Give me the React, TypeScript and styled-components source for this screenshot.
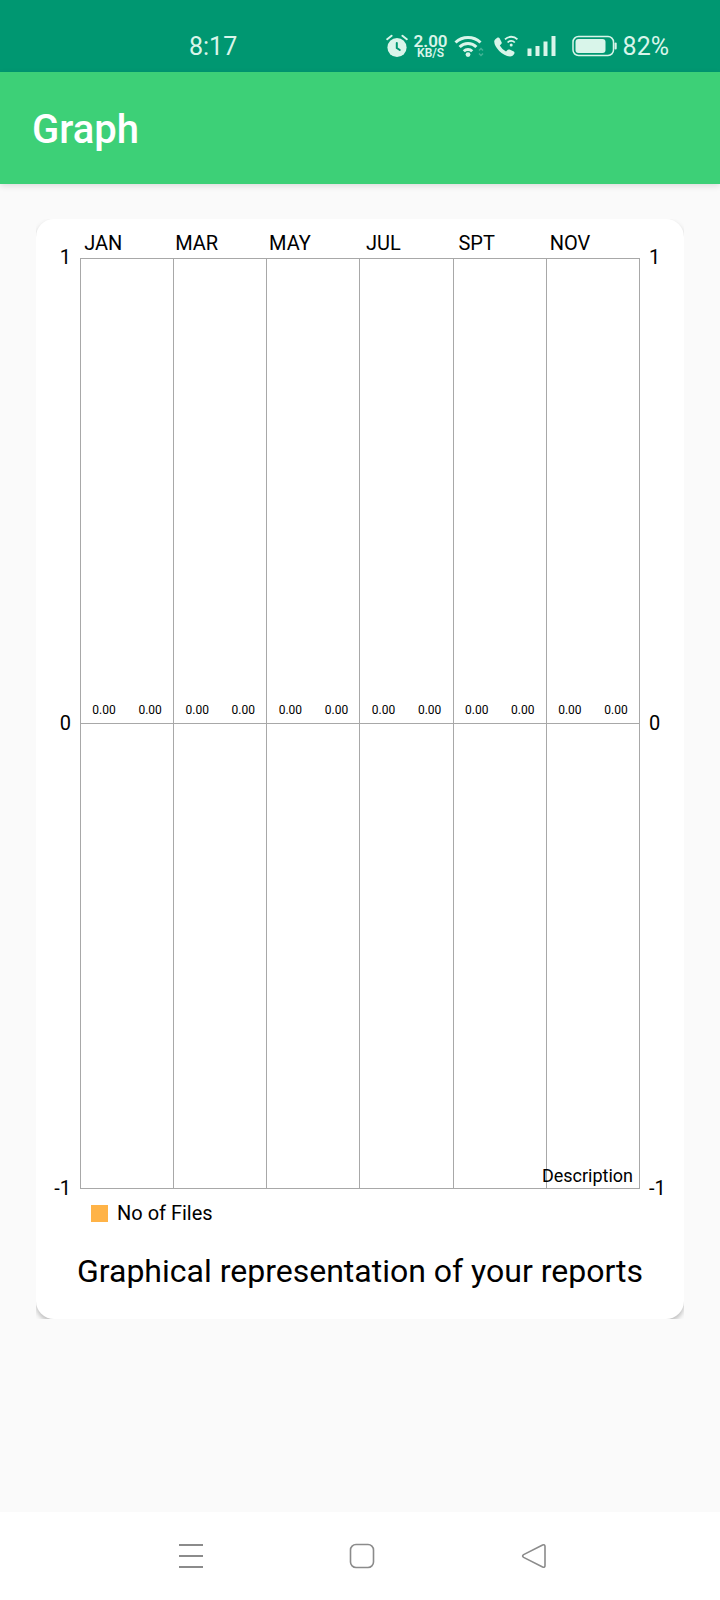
import React from "react";
import styled, { createGlobalStyle } from "styled-components";

const GlobalStyle = createGlobalStyle`
  * { box-sizing: border-box; }
  body {
    margin: 0;
    background: #fafafa;
    color: #000;
    font-family: Roboto, "Liberation Sans", sans-serif;
  }
`;

const Screen = styled.div`
  display: flex;
  flex-direction: column;
  min-height: 100vh;
`;

const StatusBar = styled.div`
  display: flex;
  align-items: center;
  justify-content: space-between;
  height: 72px;
  padding: 20px 51px 0 189px;
  background: #009771;
  color: #d9f5ea;
  font-size: 25px;
  line-height: 28px;
`;

const StatusText = styled.span`
  padding-top: 2px;
`;

const StatusIcons = styled.div`
  display: flex;
  align-items: center;
  gap: 6px;
`;

const NetSpeed = styled.div`
  display: flex;
  flex-direction: column;
  align-items: center;
  font-weight: 600;
  font-size: 12px;
  line-height: 11px;
`;

const SpeedValue = styled.span`
  font-size: 17px;
  line-height: 14px;
`;

const AppBar = styled.header`
  display: flex;
  align-items: center;
  height: 112px;
  padding: 4px 32px 0;
  background: #3dd077;
  color: #fff;
  box-shadow: 0 2px 6px rgba(0, 0, 0, 0.12);
`;

const Title = styled.h1`
  margin: 0;
  font-size: 40px;
  line-height: 48px;
  font-weight: 500;
`;

const Content = styled.main`
  flex: 1;
  padding: 35px 36px;
`;

const CardClip = styled.div`
  overflow: hidden;
`;

const Card = styled.section`
  padding: 12px 0 28px;
  border-radius: 18px;
  background: #fff;
  box-shadow: 0 3px 5px rgba(0, 0, 0, 0.25);
`;

const Chart = styled.div`
  display: grid;
  grid-template-columns: 44px 1fr 44px;
  font-size: 20px;
  line-height: 24px;
`;

const Months = styled.div`
  grid-column: 2;
  display: grid;
  grid-template-columns: repeat(12, 1fr);
  padding-bottom: 3px;
`;

const Month = styled.span<{ $slot: number }>`
  grid-column: ${(p) => p.$slot};
  display: flex;
  justify-content: center;
  white-space: nowrap;
`;

const Axis = styled.div<{ $side: "left" | "right" }>`
  grid-row: 2;
  grid-column: ${(p) => (p.$side === "left" ? 1 : 3)};
  display: flex;
  flex-direction: column;
  justify-content: space-between;
  align-items: ${(p) => (p.$side === "left" ? "flex-end" : "flex-start")};
  margin: -13px 0 -11px;
  padding: 0 9px;
`;

const Plot = styled.div`
  position: relative;
  grid-row: 2;
  grid-column: 2;
  display: grid;
  grid-template-columns: repeat(6, 1fr);
  grid-template-rows: 1fr 1fr;
  aspect-ratio: 560 / 931;
  border: solid #a8a8a8;
  border-width: 0 1px 1px 0;
`;

const Cell = styled.div`
  display: flex;
  align-items: flex-end;
  padding-bottom: 6px;
  border: solid #a8a8a8;
  border-width: 1px 0 0 1px;
`;

const BarValue = styled.span`
  flex: 1;
  font-size: 12px;
  line-height: 14px;
  text-align: center;
`;

const Description = styled.span`
  position: absolute;
  right: 6px;
  bottom: 0;
  font-size: 18px;
`;

const Legend = styled.div`
  display: flex;
  align-items: center;
  gap: 9px;
  padding: 11px 55px 0;
  font-size: 20px;
  line-height: 26px;
`;

const Swatch = styled.span`
  width: 17px;
  height: 17px;
  background: #ffb347;
`;

const Caption = styled.p`
  margin: 0;
  padding-top: 25px;
  font-size: 32px;
  line-height: 40px;
  text-align: center;
`;

const NavBar = styled.nav`
  display: grid;
  grid-template-columns: repeat(3, 1fr);
  justify-items: center;
  align-items: center;
  height: 88px;
  padding: 0 100px 0 105px;
  background: #fff;
`;

const NavButton = styled.button`
  display: flex;
  padding: 10px;
  border: 0;
  background: none;
  color: #8b8b8b;
`;

const Icon = styled.svg`
  display: block;
  flex: none;
  fill: none;
  stroke: currentColor;
`;

const AlarmIcon = () => (
  <Icon width="22" height="24" viewBox="0 0 22 24" strokeWidth="2" strokeLinecap="round">
    <circle cx="11" cy="13.5" r="9.6" fill="currentColor" stroke="none" />
    <path d="M1.2 5.2 5.6 1.8M20.8 5.2 16.4 1.8" />
    <path d="M10.8 9v5l3 2" stroke="#009771" />
  </Icon>
);

const WifiIcon = () => (
  <Icon width="32" height="24" viewBox="0 0 32 24" strokeWidth="3">
    <path d="M1.5 8.5a18 18 0 0 1 25 0M5.6 13a12 12 0 0 1 16.8 0M9.8 17.2a6 6 0 0 1 8.4 0" />
    <circle cx="14" cy="20.6" r="2.4" fill="currentColor" stroke="none" />
    <path d="m25 16.5 2-2 2 2M25 19.5l2 2 2-2" strokeWidth="1.5" opacity="0.3" />
  </Icon>
);

const CallIcon = () => (
  <Icon width="27" height="24" viewBox="-2 0 27 24" strokeWidth="1.8">
    <path
      d="M1.6 5 3.6 3.6q1.2-.6 2 .6l2 4q.5 1-.4 1.8L5.8 11.4q2.4 4.2 6.2 6l1.8-1.6q.8-.6 1.8-.2l4.2 2q1 .6.6 1.8-1.4 3-4.4 3Q10.2 22 5.2 17 .4 12 .2 7.6.2 6 1.6 5Z"
      fill="currentColor"
      stroke="none"
    />
    <path d="M11 5.4a8.6 8.6 0 0 1 12.4 0M13.6 8.5a5 5 0 0 1 7.2 0" />
    <circle cx="17.2" cy="11" r="1.5" fill="currentColor" stroke="none" />
  </Icon>
);

const SignalIcon = () => (
  <Icon width="32" height="22" viewBox="-2 0 32 22" strokeWidth="4">
    <path d="M2.5 13.5V21M10.5 11v10M18.5 6.5V21M26.5 1v20" />
  </Icon>
);

const BatteryIcon = () => (
  <Icon width="54" height="22" viewBox="-9 0 54 22" strokeWidth="1.5">
    <rect x="1" y="1.5" width="40.5" height="19" rx="5.5" />
    <rect x="3.5" y="4" width="30" height="14" rx="3" fill="currentColor" stroke="none" />
    <path d="M43.6 8.5v5" strokeWidth="2.2" strokeLinecap="round" />
  </Icon>
);

const months = ["JAN", "MAR", "MAY", "JUL", "SPT", "NOV"];
const ticks = ["1", "0", "-1"];

const YAxis = ({ side }: { side: "left" | "right" }) => (
  <Axis $side={side}>
    {ticks.map((tick) => (
      <span key={tick}>{tick}</span>
    ))}
  </Axis>
);

export default function App() {
  return (
    <Screen>
      <GlobalStyle />
      <StatusBar>
        <StatusText>8:17</StatusText>
        <StatusIcons>
          <AlarmIcon />
          <NetSpeed>
            <SpeedValue>2.00</SpeedValue>
            <span>KB/S</span>
          </NetSpeed>
          <WifiIcon />
          <CallIcon />
          <SignalIcon />
          <BatteryIcon />
          <StatusText>82%</StatusText>
        </StatusIcons>
      </StatusBar>
      <AppBar>
        <Title>Graph</Title>
      </AppBar>
      <Content>
        <CardClip>
          <Card>
            <Chart>
              <Months>
                {months.map((month, i) => (
                  <Month key={month} $slot={i * 2 + 1}>
                    {month}
                  </Month>
                ))}
              </Months>
              <YAxis side="left" />
              <Plot>
                {months.map((month) => (
                  <Cell key={month}>
                    <BarValue>0.00</BarValue>
                    <BarValue>0.00</BarValue>
                  </Cell>
                ))}
                {months.map((month) => (
                  <Cell key={month} />
                ))}
                <Description>Description</Description>
              </Plot>
              <YAxis side="right" />
            </Chart>
            <Legend>
              <Swatch />
              No of Files
            </Legend>
            <Caption>Graphical representation of your reports</Caption>
          </Card>
        </CardClip>
      </Content>
      <NavBar>
        <NavButton aria-label="Recent apps">
          <Icon width="24" height="26" viewBox="0 0 24 26" strokeWidth="2">
            <path d="M0 2h24M0 13h24M0 24h24" />
          </Icon>
        </NavButton>
        <NavButton aria-label="Home">
          <Icon width="26" height="26" viewBox="0 0 26 26" strokeWidth="1.6">
            <rect x="1.5" y="1.5" width="23" height="23" rx="5.5" />
          </Icon>
        </NavButton>
        <NavButton aria-label="Back">
          <Icon width="26" height="26" viewBox="0 0 26 26" strokeWidth="1.6" strokeLinejoin="round">
            <path d="M2.6 11.6 21.6 2q2.4-.8 2.4 1.6v18.8q0 2.4-2.4 1.6L2.6 14.4q-2-1.4 0-2.8Z" />
          </Icon>
        </NavButton>
      </NavBar>
    </Screen>
  );
}
